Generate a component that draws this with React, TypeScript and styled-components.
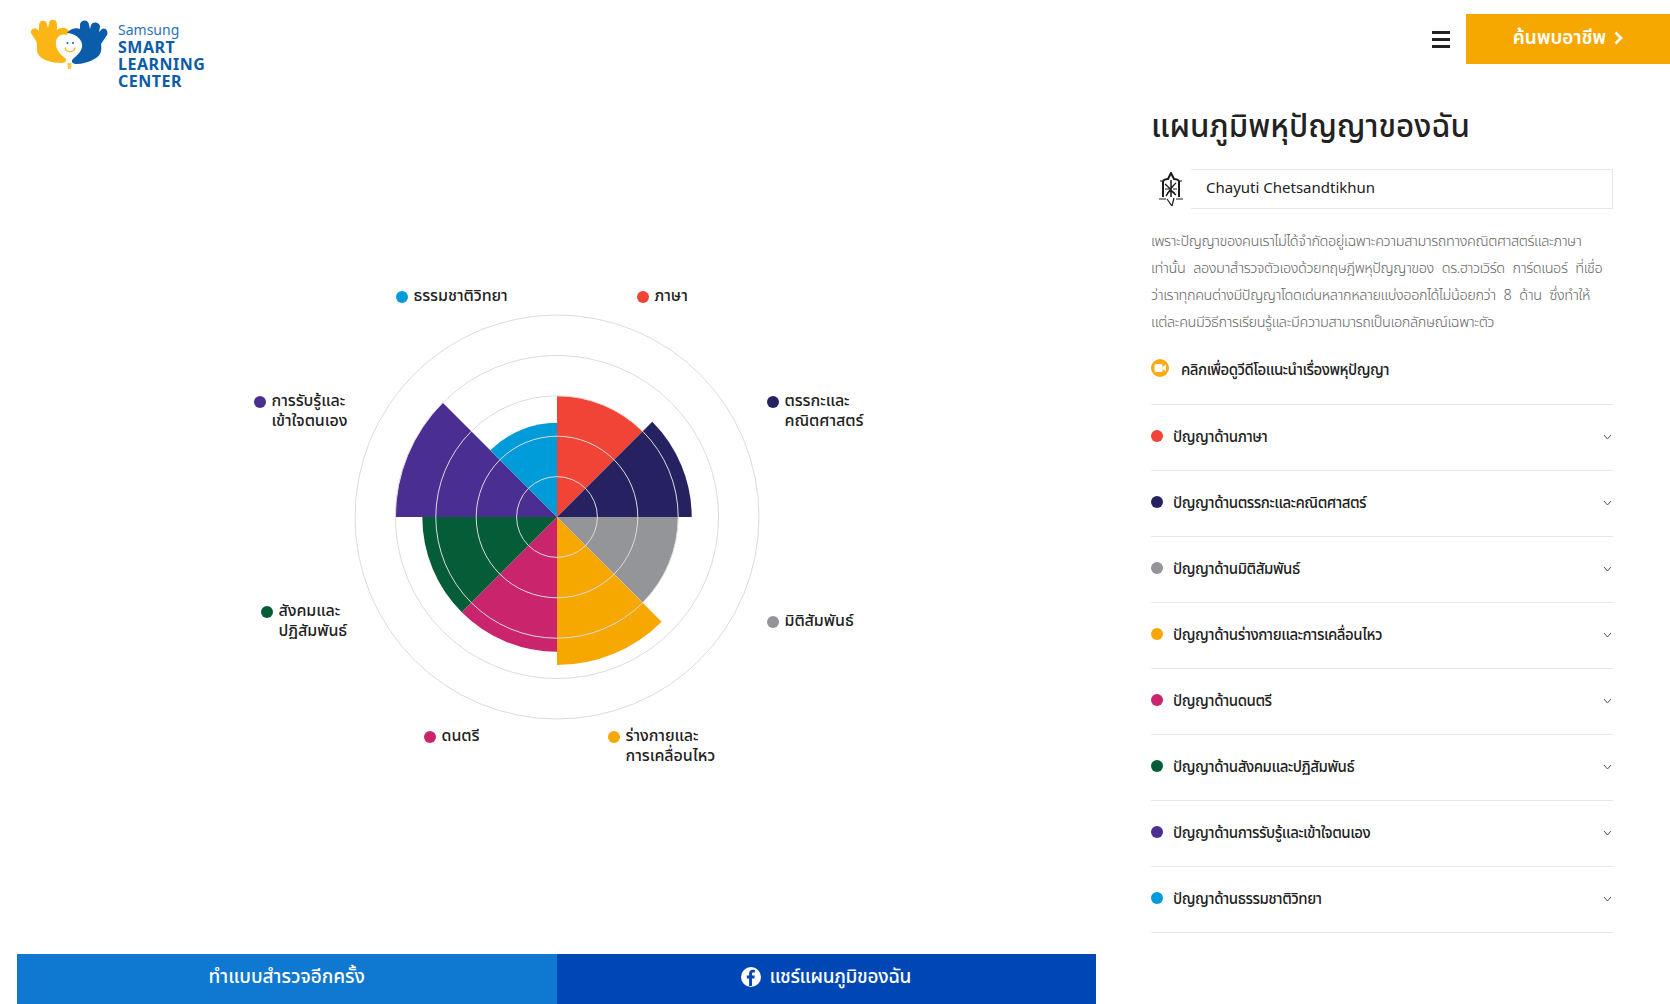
import styled, { createGlobalStyle } from "styled-components"

const thai = `"Noto Sans Thai", "Noto Sans", sans-serif`

const Global = createGlobalStyle`
  html, body { margin: 0; padding: 0; background: #fff; }
  body { font-family: ${thai}; color: #222; }
  * { box-sizing: border-box; }
`

const Page = styled.div`
  width: 1670px;
  height: 1004px;
  display: flex;
  flex-direction: column;
  overflow: hidden;
`

const Header = styled.header`
  height: 90px;
  flex: none;
  display: flex;
  align-items: flex-start;
  padding-left: 30px;
`
const Logo = styled.div`
  display: flex;
  gap: 8px;
  margin-top: 18px;
`
const LogoText = styled.div`
  padding-top: 3px;
  color: #0b5ca9;
  font-family: "Noto Sans", sans-serif;
`
const LogoSmall = styled.div`
  font-size: 14px;
  line-height: 18px;
  color: #2a72b5;
`
const LogoBig = styled.div`
  font-size: 16px;
  line-height: 17px;
  font-weight: 700;
  letter-spacing: 0.5px;
`
const Burger = styled.div`
  margin: 31px 16px 0 auto;
  width: 18px;
  height: 17px;
  display: flex;
  flex-direction: column;
  justify-content: space-between;
  span {
    display: block;
    height: 3px;
    background: #222;
  }
`
const CareerButton = styled.a`
  width: 204px;
  height: 50px;
  margin-top: 14px;
  padding-bottom: 2px;
  background: #f7a800;
  color: #fff;
  font-size: 19px;
  font-weight: 600;
  display: flex;
  align-items: center;
  justify-content: center;
  gap: 8px;
`

const Main = styled.main`
  flex: 1;
  min-height: 0;
  display: flex;
`
const LeftColumn = styled.section`
  margin-left: 17px;
  width: 1079px;
  flex: none;
  display: flex;
  flex-direction: column;
`
const ChartArea = styled.div`
  flex: 1;
  display: flex;
  align-items: center;
  justify-content: center;
  padding-bottom: 10px;
`
const Chart = styled.div`
  position: relative;
  width: 640px;
  height: 500px;
  display: flex;
  align-items: center;
  justify-content: center;
`
const Label = styled.div<{ $x: number; $y: number }>`
  position: absolute;
  left: ${({ $x }) => $x}px;
  top: ${({ $y }) => $y}px;
  display: flex;
  gap: 6px;
  font-size: 16px;
  line-height: 19.5px;
  font-weight: 500;
  letter-spacing: -0.05px;
  white-space: nowrap;
`
const Dot = styled.i<{ $c: string }>`
  flex: none;
  width: 12px;
  height: 12px;
  border-radius: 50%;
  background: ${({ $c }) => $c};
`
const LabelDot = styled(Dot)`
  margin-top: 4px;
`
const RowDot = styled(Dot)`
  margin-bottom: 3px;
`
const ButtonBar = styled.div`
  height: 50px;
  flex: none;
  display: flex;
`
const BarButton = styled.a<{ $bg: string; $ls?: number }>`
  flex: 1;
  padding-bottom: 4px;
  background: ${({ $bg }) => $bg};
  color: #fff;
  font-size: 19px;
  font-weight: 500;
  letter-spacing: ${({ $ls }) => $ls ?? 0}px;
  display: flex;
  align-items: center;
  justify-content: center;
  gap: 8px;
`

const RightColumn = styled.aside`
  margin-left: 55px;
  width: 462px;
  flex: none;
  padding-top: 16px;
`
const Title = styled.h1`
  margin: 0 0 19px;
  font-size: 31.3px;
  line-height: 44px;
  font-weight: 500;
  color: #222;
`
const UserRow = styled.div`
  height: 40px;
  display: flex;
  align-items: center;
  gap: 8px;
  padding-left: 8px;
`
const UserName = styled.div`
  flex: 1;
  height: 40px;
  border: 1px solid #e8e8e8;
  border-left: 0;
  padding: 0 0 5px 15px;
  display: flex;
  align-items: center;
  font-size: 15px;
  font-family: "Noto Sans", sans-serif;
  color: #222;
`
const Intro = styled.p`
  margin: 20px 0 0;
  font-size: 14.5px;
  line-height: 27px;
  font-weight: 300;
  letter-spacing: -0.42px;
  word-spacing: 4.5px;
  color: #666;
  white-space: nowrap;
`
const VideoLink = styled.a`
  margin: 22px 0 27px;
  height: 18px;
  display: flex;
  align-items: center;
  gap: 12px;
  font-size: 15px;
  font-weight: 500;
  letter-spacing: -0.5px;
  color: #222;
`
const VideoText = styled.span`
  padding-top: 4px;
`
const Accordion = styled.ul`
  margin: 0;
  padding: 0;
  list-style: none;
  border-top: 1px solid #e8e8e8;
`
const AccordionRow = styled.li`
  height: 66px;
  border-bottom: 1px solid #e8e8e8;
  display: flex;
  align-items: center;
  gap: 10px;
  font-size: 15px;
  font-weight: 500;
  letter-spacing: -0.45px;
  color: #222;
`
const Caret = styled.svg`
  margin: 0 1px 2px auto;
`

type Wedge = { color: string; radius: number }
const CX = 320
const CY = 250
const wedges: Wedge[] = [
  { color: "#f14336", radius: 121 },
  { color: "#262262", radius: 134.7 },
  { color: "#939598", radius: 121 },
  { color: "#f7a800", radius: 148 },
  { color: "#c9246c", radius: 134.7 },
  { color: "#045d36", radius: 134.7 },
  { color: "#4b2e91", radius: 161.6 },
  { color: "#009bd9", radius: 94.3 },
]
const rings = [40.4, 80.8, 121.2, 161.6, 202]

const wedgePath = (i: number, r: number) => {
  const a0 = ((i * 45 - 90) * Math.PI) / 180
  const a1 = (((i + 1) * 45 - 90) * Math.PI) / 180
  const x0 = CX + r * Math.cos(a0)
  const y0 = CY + r * Math.sin(a0)
  const x1 = CX + r * Math.cos(a1)
  const y1 = CY + r * Math.sin(a1)
  return `M${CX} ${CY}L${x0} ${y0}A${r} ${r} 0 0 1 ${x1} ${y1}Z`
}

const labels = [
  { color: "#009bd9", x: 159, y: 20, lines: ["ธรรมชาติวิทยา"] },
  { color: "#f14336", x: 400, y: 20, lines: ["ภาษา"] },
  { color: "#262262", x: 530, y: 125, lines: ["ตรรกะและ", "คณิตศาสตร์"] },
  { color: "#939598", x: 530, y: 345, lines: ["มิติสัมพันธ์"] },
  { color: "#f7a800", x: 371, y: 460, lines: ["ร่างกายและ", "การเคลื่อนไหว"] },
  { color: "#c9246c", x: 187, y: 460, lines: ["ดนตรี"] },
  { color: "#045d36", x: 24, y: 335, lines: ["สังคมและ", "ปฏิสัมพันธ์"] },
  { color: "#4b2e91", x: 17, y: 125, lines: ["การรับรู้และ", "เข้าใจตนเอง"] },
]

const skills = [
  { color: "#f14336", name: "ปัญญาด้านภาษา" },
  { color: "#262262", name: "ปัญญาด้านตรรกะและคณิตศาสตร์" },
  { color: "#939598", name: "ปัญญาด้านมิติสัมพันธ์" },
  { color: "#f7a800", name: "ปัญญาด้านร่างกายและการเคลื่อนไหว" },
  { color: "#c9246c", name: "ปัญญาด้านดนตรี" },
  { color: "#045d36", name: "ปัญญาด้านสังคมและปฏิสัมพันธ์" },
  { color: "#4b2e91", name: "ปัญญาด้านการรับรู้และเข้าใจตนเอง" },
  { color: "#009bd9", name: "ปัญญาด้านธรรมชาติวิทยา" },
]

const LogoMark = () => (
  <svg width="80" height="54" viewBox="30 18 80 54">
    <path
      fill="#fdb515"
      d="M31 33C30 29 35 27 37 29L39 31L39 25C39 20 46 19 47 24L48 28L49 23C50 18 57 19 57 24L57 30C61 27 66 27 69 31L67 35C60 33 55 38 56 45C57 51 61 55 65 58C67 60 66 63 62 63C52 63 41 60 38 54C36 49 38 45 36 41Z"
    />
    <path
      fill="#0b5ca9"
      d="M67 33C70 29 76 27 80 29L80 25C80 19 89 19 89 25L90 29L91 25C93 21 100 22 100 27L99 32L102 29C105 27 109 31 107 35L101 44C102 50 101 55 96 58C90 62 82 64 76 64C71 64 71 60 74 58C79 54 83 49 82 44C81 38 74 33 67 33Z"
    />
    <circle cx="67.5" cy="43" r="1" fill="#0b5ca9" />
    <circle cx="73" cy="43" r="1" fill="#0b5ca9" />
    <path d="M65 47.5C66 53 74 53 75 47.5" fill="none" stroke="#fdb515" strokeWidth="1.3" />
    <path d="M67.5 64H71.5M67.5 66H71.5M68 68H71" stroke="#fdb515" strokeWidth="1.3" />
  </svg>
)

const Avatar = () => (
  <svg width="24" height="34" viewBox="0 0 24 34" fill="none" stroke="#1c1c1c">
    <path d="M4 10C4 8 7 7 9 7L12 1L15 7C17 7 20 8 20 10V25M4 10V25" strokeWidth="2" />
    <path d="M0 27H7M17 27H24M1 9H5M19 9H23" strokeWidth="1.2" />
    <path d="M8 27L13 34L15 26" strokeWidth="1.2" />
    <path d="M6 12C9 14 13 20 17 23M17 11C13 14 10 20 7 24M12 8V25" strokeWidth="1.5" />
    <path d="M6 17H10M14 17H18M8 21C10 19 14 19 16 21" strokeWidth="1" />
  </svg>
)

const VideoIcon = () => (
  <svg width="18" height="18" viewBox="0 0 18 18">
    <circle cx="9" cy="9" r="9" fill="#f9ab16" />
    <rect x="3.5" y="5" width="8" height="8" rx="1.5" fill="#fff" />
    <path d="M11.5 8L15 5.5V12.5L11.5 10Z" fill="#fff" />
  </svg>
)

const FacebookIcon = () => (
  <svg width="20" height="20" viewBox="0 0 20 20">
    <circle cx="10" cy="10" r="10" fill="#fff" />
    <path
      fill="#0047b6"
      d="M11 19V11.5H13.4L13.8 8.6H11V6.9C11 6 11.3 5.5 12.4 5.5H13.9V3C13.4 2.9 12.7 2.8 11.8 2.8C9.6 2.8 8.1 4.1 8.1 6.5V8.6H5.8V11.5H8.1V19Z"
    />
  </svg>
)

export default function App() {
  return (
    <Page>
      <Global />
      <Header>
        <Logo>
          <LogoMark />
          <LogoText>
            <LogoSmall>Samsung</LogoSmall>
            <LogoBig>SMART</LogoBig>
            <LogoBig>LEARNING</LogoBig>
            <LogoBig>CENTER</LogoBig>
          </LogoText>
        </Logo>
        <Burger>
          <span />
          <span />
          <span />
        </Burger>
        <CareerButton>
          ค้นพบอาชีพ
          <svg width="9" height="14" viewBox="0 0 9 14" fill="none" stroke="#fff" strokeWidth="2.6">
            <path d="M1.5 1.5L7 7L1.5 12.5" />
          </svg>
        </CareerButton>
      </Header>
      <Main>
        <LeftColumn>
          <ChartArea>
            <Chart>
              <svg width="640" height="500" viewBox="0 0 640 500">
                {wedges.map((w, i) => (
                  <path key={w.color} d={wedgePath(i, w.radius)} fill={w.color} />
                ))}
                {rings.map((r) => (
                  <circle key={r} cx={CX} cy={CY} r={r} fill="none" stroke="#dcdcdc" />
                ))}
              </svg>
              {labels.map((l) => (
                <Label key={l.color} $x={l.x} $y={l.y}>
                  <LabelDot $c={l.color} />
                  <div>
                    {l.lines.map((t) => (
                      <div key={t}>{t}</div>
                    ))}
                  </div>
                </Label>
              ))}
            </Chart>
          </ChartArea>
          <ButtonBar>
            <BarButton $bg="#0f78d1">ทำแบบสำรวจอีกครั้ง</BarButton>
            <BarButton $bg="#0047b6" $ls={-0.3}>
              <FacebookIcon />
              แชร์แผนภูมิของฉัน
            </BarButton>
          </ButtonBar>
        </LeftColumn>
        <RightColumn>
          <Title>แผนภูมิพหุปัญญาของฉัน</Title>
          <UserRow>
            <Avatar />
            <UserName>Chayuti Chetsandtikhun</UserName>
          </UserRow>
          <Intro>
            เพราะปัญญาของคนเราไม่ได้จำกัดอยู่เฉพาะความสามารถทางคณิตศาสตร์และภาษา
            <br />
            เท่านั้น ลองมาสำรวจตัวเองด้วยทฤษฎีพหุปัญญาของ ดร.ฮาวเวิร์ด การ์ดเนอร์ ที่เชื่อ
            <br />
            ว่าเราทุกคนต่างมีปัญญาโดดเด่นหลากหลายแบ่งออกได้ไม่น้อยกว่า 8 ด้าน ซึ่งทำให้
            <br />
            แต่ละคนมีวิธีการเรียนรู้และมีความสามารถเป็นเอกลักษณ์เฉพาะตัว
          </Intro>
          <VideoLink>
            <VideoIcon />
            <VideoText>คลิกเพื่อดูวีดีโอแนะนำเรื่องพหุปัญญา</VideoText>
          </VideoLink>
          <Accordion>
            {skills.map((s) => (
              <AccordionRow key={s.color}>
                <RowDot $c={s.color} />
                {s.name}
                <Caret width="9" height="6" viewBox="0 0 9 6" fill="none" stroke="#555">
                  <path d="M1 1L4.5 5L8 1" />
                </Caret>
              </AccordionRow>
            ))}
          </Accordion>
        </RightColumn>
      </Main>
    </Page>
  )
}
